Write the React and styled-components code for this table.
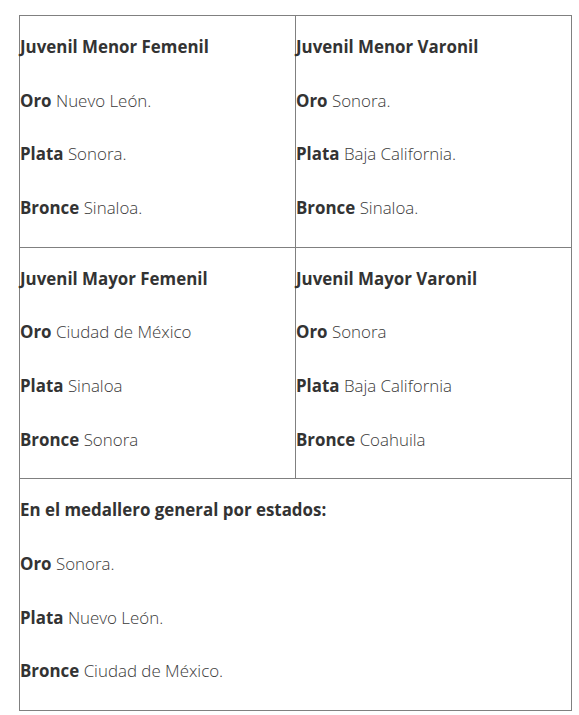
import styled, { createGlobalStyle } from 'styled-components';

const GlobalStyle = createGlobalStyle`
  body {
    margin: 0;
    background: #ffffff;
    font-family: 'Open Sans', 'Liberation Sans', sans-serif;
  }
`;

const categories = [
  [
    {
      title: 'Juvenil Menor Femenil',
      medals: [
        ['Oro', 'Nuevo León.'],
        ['Plata', 'Sonora.'],
        ['Bronce', 'Sinaloa.'],
      ],
    },
    {
      title: 'Juvenil Menor Varonil',
      medals: [
        ['Oro', 'Sonora.'],
        ['Plata', 'Baja California.'],
        ['Bronce', 'Sinaloa.'],
      ],
    },
  ],
  [
    {
      title: 'Juvenil Mayor Femenil',
      medals: [
        ['Oro', 'Ciudad de México'],
        ['Plata', 'Sinaloa'],
        ['Bronce', 'Sonora'],
      ],
    },
    {
      title: 'Juvenil Mayor Varonil',
      medals: [
        ['Oro', 'Sonora'],
        ['Plata', 'Baja California'],
        ['Bronce', 'Coahuila'],
      ],
    },
  ],
];

const general = {
  title: 'En el medallero general por estados:',
  medals: [
    ['Oro', 'Sonora.'],
    ['Plata', 'Nuevo León.'],
    ['Bronce', 'Ciudad de México.'],
  ],
};

function CellContent({ title, medals }) {
  return (
    <>
      <Line>
        <Strong>{title}</Strong>
      </Line>
      {medals.map(([medal, state]) => (
        <Line key={medal}>
          <Strong>{medal}</Strong> {state}
        </Line>
      ))}
    </>
  );
}

export default function App() {
  return (
    <Page>
      <GlobalStyle />
      <Table>
        <tbody>
          {categories.map((row, i) => (
            <tr key={i}>
              {row.map((cat) => (
                <Cell key={cat.title}>
                  <CellContent {...cat} />
                </Cell>
              ))}
            </tr>
          ))}
          <tr>
            <Cell colSpan={2}>
              <CellContent {...general} />
            </Cell>
          </tr>
        </tbody>
      </Table>
    </Page>
  );
}

const Page = styled.div`
  padding: 15px 0 0 19px;
`;

const Table = styled.table`
  width: 553px;
  border-collapse: collapse;
  table-layout: fixed;
`;

const Cell = styled.td`
  border: 1px solid #808080;
  padding: 18px 0 25.67px 0;
  vertical-align: top;
  width: 50%;
`;

const Line = styled.p`
  margin: 0 0 27.67px;
  font-size: 16.9px;
  line-height: 26px;
  font-weight: 300;
  color: #3a3a3a;

  &:last-child {
    margin-bottom: 0;
  }
`;

const Strong = styled.strong`
  font-weight: 700;
  color: #333333;
`;
